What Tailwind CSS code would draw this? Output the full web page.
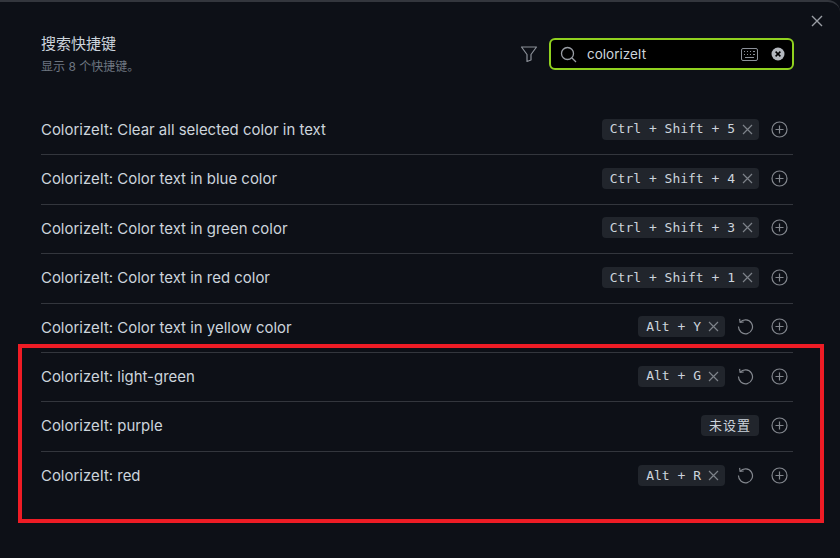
<!DOCTYPE html>
<html lang="zh">
  <head>
    <meta charset="UTF-8" />
    <script src="https://cdn.jsdelivr.net/npm/@tailwindcss/browser@4"></script>
    <title>快捷键</title>
  </head>

  <body class="bg-[#0d1017] overflow-hidden">
    <div class="relative w-[840px] h-[558px] bg-[#0d1017] border-t-2 border-[#33363d] rounded-tr-[12px] font-['Inter','Noto_Sans_CJK_SC',sans-serif] text-[#ccd4dc]">
      <!-- close -->
      <svg class="absolute left-[810px] top-[12px]" width="14" height="14" viewBox="0 0 14 14" fill="none" stroke="#9a9ea5" stroke-width="1.4"><path d="M2 2l10 10M12 2L2 12" /></svg>

      <!-- header -->
      <div class="flex items-start justify-between pl-[41px] pr-[46px] pt-[36px] h-[104px]">
        <div>
          <div class="text-[15px] leading-[14px] mt-[-1px] text-[#ccd4dc]">搜索快捷键</div>
          <div class="text-[12px] leading-[14px] mt-[9px] text-[#6e7681]">显示 8 个快捷键。</div>
        </div>
        <div class="flex items-center gap-[11px]">
          <svg width="18" height="18" viewBox="0 0 18 18" fill="none" stroke="#8b9098" stroke-width="1.2" stroke-linejoin="round"><path d="M1.5 2h15L11 9.5V15l-4 1.5v-7z" /></svg>
          <div class="flex items-center w-[245px] h-[32px] bg-black border-2 border-[#90d11f] rounded-[6px] pl-[9px] pr-[7px]">
            <svg width="17" height="17" viewBox="0 0 17 17" fill="none" stroke="#9a9ea5" stroke-width="1.3"><circle cx="7.5" cy="7.5" r="6" /><path d="M12 12l4 4" /></svg>
            <span class="ml-[10px] text-[13.5px] text-[#ccd4dc] flex-1">colorizeIt</span>
            <svg width="17" height="13" viewBox="0 0 17 13" fill="none" stroke="#8b9098"><rect x="0.5" y="0.5" width="16" height="12" rx="1.5" /><path d="M3 3.5h1M6 3.5h1M9 3.5h1M12 3.5h2M3 6.5h1M6 6.5h1M9 6.5h1M12 6.5h2M4 9.5h9" /></svg>
            <svg class="ml-[13px]" width="14" height="14" viewBox="0 0 14 14"><circle cx="7" cy="7" r="6.5" fill="#b4b8be" /><path d="M4.6 4.6l4.8 4.8M9.4 4.6L4.6 9.4" stroke="#000" stroke-width="1.5" /></svg>
          </div>
        </div>
      </div>

      <!-- rows -->
      <div class="ml-[41px] w-[752px] flex flex-col text-[14.95px]">
        <div class="flex items-center justify-between h-[49.4px] border-b border-[#33363d] pr-[5px]">
          <span>ColorizeIt: Clear all selected color in text</span>
          <div class="flex items-center mb-[2px]">
            <span class="flex items-center h-[21px] rounded-[4px] bg-[#21252c] pl-[8px] pr-[6px] font-['DejaVu_Sans_Mono',monospace] text-[13px]">Ctrl + Shift + 5<svg class="ml-[7px]" width="11" height="11" viewBox="0 0 11 11" fill="none" stroke="#7d8289" stroke-width="1.2"><path d="M1 1l9 9M10 1L1 10" /></svg></span>
            <svg class="ml-[12px]" width="17" height="17" viewBox="0 0 17 17" fill="none" stroke="#83878e" stroke-width="1.2"><circle cx="8.5" cy="8.5" r="7.5" /><path d="M8.5 4.5v8M4.5 8.5h8" /></svg>
          </div>
        </div>
        <div class="flex items-center justify-between h-[49.4px] border-b border-[#33363d] pr-[5px]">
          <span>ColorizeIt: Color text in blue color</span>
          <div class="flex items-center mb-[2px]">
            <span class="flex items-center h-[21px] rounded-[4px] bg-[#21252c] pl-[8px] pr-[6px] font-['DejaVu_Sans_Mono',monospace] text-[13px]">Ctrl + Shift + 4<svg class="ml-[7px]" width="11" height="11" viewBox="0 0 11 11" fill="none" stroke="#7d8289" stroke-width="1.2"><path d="M1 1l9 9M10 1L1 10" /></svg></span>
            <svg class="ml-[12px]" width="17" height="17" viewBox="0 0 17 17" fill="none" stroke="#83878e" stroke-width="1.2"><circle cx="8.5" cy="8.5" r="7.5" /><path d="M8.5 4.5v8M4.5 8.5h8" /></svg>
          </div>
        </div>
        <div class="flex items-center justify-between h-[49.4px] border-b border-[#33363d] pr-[5px]">
          <span>ColorizeIt: Color text in green color</span>
          <div class="flex items-center mb-[2px]">
            <span class="flex items-center h-[21px] rounded-[4px] bg-[#21252c] pl-[8px] pr-[6px] font-['DejaVu_Sans_Mono',monospace] text-[13px]">Ctrl + Shift + 3<svg class="ml-[7px]" width="11" height="11" viewBox="0 0 11 11" fill="none" stroke="#7d8289" stroke-width="1.2"><path d="M1 1l9 9M10 1L1 10" /></svg></span>
            <svg class="ml-[12px]" width="17" height="17" viewBox="0 0 17 17" fill="none" stroke="#83878e" stroke-width="1.2"><circle cx="8.5" cy="8.5" r="7.5" /><path d="M8.5 4.5v8M4.5 8.5h8" /></svg>
          </div>
        </div>
        <div class="flex items-center justify-between h-[49.4px] border-b border-[#33363d] pr-[5px]">
          <span>ColorizeIt: Color text in red color</span>
          <div class="flex items-center mb-[2px]">
            <span class="flex items-center h-[21px] rounded-[4px] bg-[#21252c] pl-[8px] pr-[6px] font-['DejaVu_Sans_Mono',monospace] text-[13px]">Ctrl + Shift + 1<svg class="ml-[7px]" width="11" height="11" viewBox="0 0 11 11" fill="none" stroke="#7d8289" stroke-width="1.2"><path d="M1 1l9 9M10 1L1 10" /></svg></span>
            <svg class="ml-[12px]" width="17" height="17" viewBox="0 0 17 17" fill="none" stroke="#83878e" stroke-width="1.2"><circle cx="8.5" cy="8.5" r="7.5" /><path d="M8.5 4.5v8M4.5 8.5h8" /></svg>
          </div>
        </div>
        <div class="flex items-center justify-between h-[49.4px] border-b border-[#33363d] pr-[5px]">
          <span>ColorizeIt: Color text in yellow color</span>
          <div class="flex items-center mb-[2px]">
            <span class="flex items-center h-[21px] rounded-[4px] bg-[#21252c] pl-[8px] pr-[6px] font-['DejaVu_Sans_Mono',monospace] text-[13px]">Alt + Y<svg class="ml-[7px]" width="11" height="11" viewBox="0 0 11 11" fill="none" stroke="#7d8289" stroke-width="1.2"><path d="M1 1l9 9M10 1L1 10" /></svg></span>
            <svg class="ml-[12px]" width="17" height="17" viewBox="0 0 17 17" fill="none" stroke="#83878e" stroke-width="1.2"><path d="M3.2 4.2A7 7 0 1 1 1.5 8.5" /><path d="M2.6 0.8l.5 3.6 3.6-.4" /></svg>
            <svg class="ml-[17px]" width="17" height="17" viewBox="0 0 17 17" fill="none" stroke="#83878e" stroke-width="1.2"><circle cx="8.5" cy="8.5" r="7.5" /><path d="M8.5 4.5v8M4.5 8.5h8" /></svg>
          </div>
        </div>
        <div class="flex items-center justify-between h-[49.4px] border-b border-[#33363d] pr-[5px]">
          <span>ColorizeIt: light-green</span>
          <div class="flex items-center mb-[2px]">
            <span class="flex items-center h-[21px] rounded-[4px] bg-[#21252c] pl-[8px] pr-[6px] font-['DejaVu_Sans_Mono',monospace] text-[13px]">Alt + G<svg class="ml-[7px]" width="11" height="11" viewBox="0 0 11 11" fill="none" stroke="#7d8289" stroke-width="1.2"><path d="M1 1l9 9M10 1L1 10" /></svg></span>
            <svg class="ml-[12px]" width="17" height="17" viewBox="0 0 17 17" fill="none" stroke="#83878e" stroke-width="1.2"><path d="M3.2 4.2A7 7 0 1 1 1.5 8.5" /><path d="M2.6 0.8l.5 3.6 3.6-.4" /></svg>
            <svg class="ml-[17px]" width="17" height="17" viewBox="0 0 17 17" fill="none" stroke="#83878e" stroke-width="1.2"><circle cx="8.5" cy="8.5" r="7.5" /><path d="M8.5 4.5v8M4.5 8.5h8" /></svg>
          </div>
        </div>
        <div class="flex items-center justify-between h-[49.4px] border-b border-[#33363d] pr-[5px]">
          <span>ColorizeIt: purple</span>
          <div class="flex items-center mb-[2px]">
            <span class="flex items-center h-[21px] rounded-[4px] bg-[#21252c] pl-[8px] pr-[8px] text-[13px] tracking-[1px]">未设置</span>
            <svg class="ml-[12px]" width="17" height="17" viewBox="0 0 17 17" fill="none" stroke="#83878e" stroke-width="1.2"><circle cx="8.5" cy="8.5" r="7.5" /><path d="M8.5 4.5v8M4.5 8.5h8" /></svg>
          </div>
        </div>
        <div class="flex items-center justify-between h-[49.4px] pr-[5px]">
          <span>ColorizeIt: red</span>
          <div class="flex items-center mb-[2px]">
            <span class="flex items-center h-[21px] rounded-[4px] bg-[#21252c] pl-[8px] pr-[6px] font-['DejaVu_Sans_Mono',monospace] text-[13px]">Alt + R<svg class="ml-[7px]" width="11" height="11" viewBox="0 0 11 11" fill="none" stroke="#7d8289" stroke-width="1.2"><path d="M1 1l9 9M10 1L1 10" /></svg></span>
            <svg class="ml-[12px]" width="17" height="17" viewBox="0 0 17 17" fill="none" stroke="#83878e" stroke-width="1.2"><path d="M3.2 4.2A7 7 0 1 1 1.5 8.5" /><path d="M2.6 0.8l.5 3.6 3.6-.4" /></svg>
            <svg class="ml-[17px]" width="17" height="17" viewBox="0 0 17 17" fill="none" stroke="#83878e" stroke-width="1.2"><circle cx="8.5" cy="8.5" r="7.5" /><path d="M8.5 4.5v8M4.5 8.5h8" /></svg>
          </div>
        </div>
      </div>

      <!-- red annotation box -->
      <div class="absolute left-[18px] top-[342px] w-[806px] h-[179px] border-4 border-[#ee1c25]"></div>
    </div>
  </body>
</html>
